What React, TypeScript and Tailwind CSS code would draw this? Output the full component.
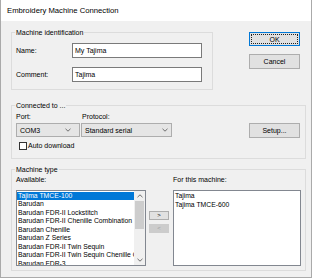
import React from "react";

const Chevron = ({ dir = "down" }: { dir?: "down" | "up" }) => (
  <svg width="6" height="4" viewBox="0 0 6 4" className="block">
    <polyline
      points={dir === "down" ? "0.5,0.8 3,3.2 5.5,0.8" : "0.5,3.2 3,0.8 5.5,3.2"}
      fill="none"
      stroke="#606060"
      strokeWidth="0.9"
    />
  </svg>
);

const available = [
  "Tajima TMCE-100",
  "Barudan",
  "Barudan FDR-II Lockstitch",
  "Barudan FDR-II Chenille Combination",
  "Barudan Chenille",
  "Barudan Z Series",
  "Barudan FDR-II Twin Sequin",
  "Barudan FDR-II Twin Sequin Chenille Combination",
  "Barudan FDR-3",
];

const forThis = ["Tajima", "Tajima TMCE-600"];

export default function App() {
  return (
    <div className="w-[326px] h-[280px] bg-white text-black text-[7px] leading-[9px] font-['Liberation_Sans',Arial,sans-serif]">
      <div className="w-[312px] h-[278px] flex flex-col border-x border-b border-[#aaaaaa]">
        {/* Title bar */}
        <div className="h-[21px] shrink-0 bg-white flex items-center pl-[6px] text-[7.7px]">
          Embroidery Machine Connection
        </div>

        {/* Body */}
        <div className="flex-1 bg-[#f0f0f0] pl-[10px] pt-[11px]">
          {/* Row 1 */}
          <div className="flex items-start">
            <div className="relative w-[202px] h-[58px] border border-[#dcdcdc]">
              <span className="absolute left-[3px] -top-[5px] px-[1px] bg-[#f0f0f0]">
                Machine identification
              </span>
              <div className="pt-[10px] pl-[4px] flex flex-col gap-[9px]">
                <div className="flex items-center">
                  <span className="w-[56px]">Name:</span>
                  <div className="w-[130px] h-[15px] bg-white border border-[#7a7a7a] pl-[2px] flex items-center">
                    My Tajima
                  </div>
                </div>
                <div className="flex items-center">
                  <span className="w-[56px]">Comment:</span>
                  <div className="w-[130px] h-[15px] bg-white border border-[#7a7a7a] pl-[2px] flex items-center">
                    Tajima
                  </div>
                </div>
              </div>
            </div>

            <div className="ml-[36px] flex flex-col gap-[8px]">
              <div className="w-[51px] h-[14px] border border-[#0078d7] bg-[#e1e1e1] p-[1px]">
                <div className="h-full border border-dotted border-[#202020] flex items-center justify-center">
                  OK
                </div>
              </div>
              <div className="w-[51px] h-[15px] border border-[#adadad] bg-[#e1e1e1] flex items-center justify-center">
                Cancel
              </div>
            </div>
          </div>

          {/* Connected to */}
          <div className="relative mt-[15px] w-[295px] h-[54px] border border-[#dcdcdc]">
            <span className="absolute left-[3px] -top-[5px] px-[1px] bg-[#f0f0f0]">
              Connected to ...
            </span>
            <div className="pt-[6px] pl-[4px]">
              <div className="flex items-start">
                <div className="w-[65px] flex flex-col gap-[2px]">
                  <span>Port:</span>
                  <div className="w-[64px] h-[14px] bg-[#e5e5e5] border border-[#adadad] flex items-center justify-between pl-[3px] pr-[8px]">
                    <span>COM3</span>
                    <Chevron />
                  </div>
                </div>
                <div className="w-[91px] flex flex-col gap-[2px]">
                  <span className="pl-[1px]">Protocol:</span>
                  <div className="w-[91px] h-[14px] bg-[#e5e5e5] border border-[#adadad] flex items-center justify-between pl-[3px] pr-[3px]">
                    <span>Standard serial</span>
                    <Chevron />
                  </div>
                </div>
                <div className="ml-[77px] mt-[11px] w-[51px] h-[15px] border border-[#adadad] bg-[#e1e1e1] flex items-center justify-center">
                  Setup...
                </div>
              </div>
              <div className="mt-[3px] pl-[3px] flex items-center gap-[1px]">
                <div className="w-[8px] h-[8px] bg-white border border-[#333333]" />
                <span>Auto download</span>
              </div>
            </div>
          </div>

          {/* Machine type */}
          <div className="relative mt-[10px] w-[295px] h-[102px] border border-[#dcdcdc]">
            <span className="absolute left-[3px] -top-[5px] px-[1px] bg-[#f0f0f0]">
              Machine type
            </span>
            <div className="pt-[5px] pl-[4px]">
              <div className="flex">
                <span className="w-[157px]">Available:</span>
                <span>For this machine:</span>
              </div>
              <div className="mt-[6px] flex items-start">
                <div className="w-[130px] h-[76px] border border-[#828790] bg-white flex overflow-hidden">
                  <div className="flex-1 min-w-0 overflow-hidden text-[6.8px] leading-[8.5px] pt-[0.5px]">
                    {available.map((item, i) => (
                      <div
                        key={item}
                        className={
                          i === 0
                            ? "whitespace-nowrap pl-[1px] bg-[#0078d7] text-white"
                            : "whitespace-nowrap pl-[1px]"
                        }
                      >
                        {item}
                      </div>
                    ))}
                  </div>
                  <div className="w-[11px] shrink-0 bg-[#f0f0f0] flex flex-col items-center">
                    <div className="h-[10px] flex items-center justify-center">
                      <Chevron dir="up" />
                    </div>
                    <div className="w-[9px] h-[28px] bg-[#cdcdcd]" />
                    <div className="flex-1" />
                    <div className="h-[10px] flex items-center justify-center">
                      <Chevron />
                    </div>
                  </div>
                </div>

                <div className="ml-[3px] w-[20px] flex flex-col pt-[21px] gap-[4px]">
                  <div className="h-[9px] border border-[#adadad] bg-[#e1e1e1] flex items-center justify-center text-[6px]">
                    &gt;
                  </div>
                  <div className="h-[9px] border border-[#cccccc] bg-[#cccccc] flex items-center justify-center text-[6px] text-[#a0a0a0]">
                    &lt;
                  </div>
                </div>

                <div className="ml-[4px] w-[128px] h-[76px] border border-[#828790] bg-white text-[6.8px] leading-[8.5px] pt-[1px] overflow-hidden">
                  {forThis.map((item) => (
                    <div key={item} className="whitespace-nowrap pl-[1px]">
                      {item}
                    </div>
                  ))}
                </div>
              </div>
            </div>
          </div>
        </div>
      </div>
    </div>
  );
}
